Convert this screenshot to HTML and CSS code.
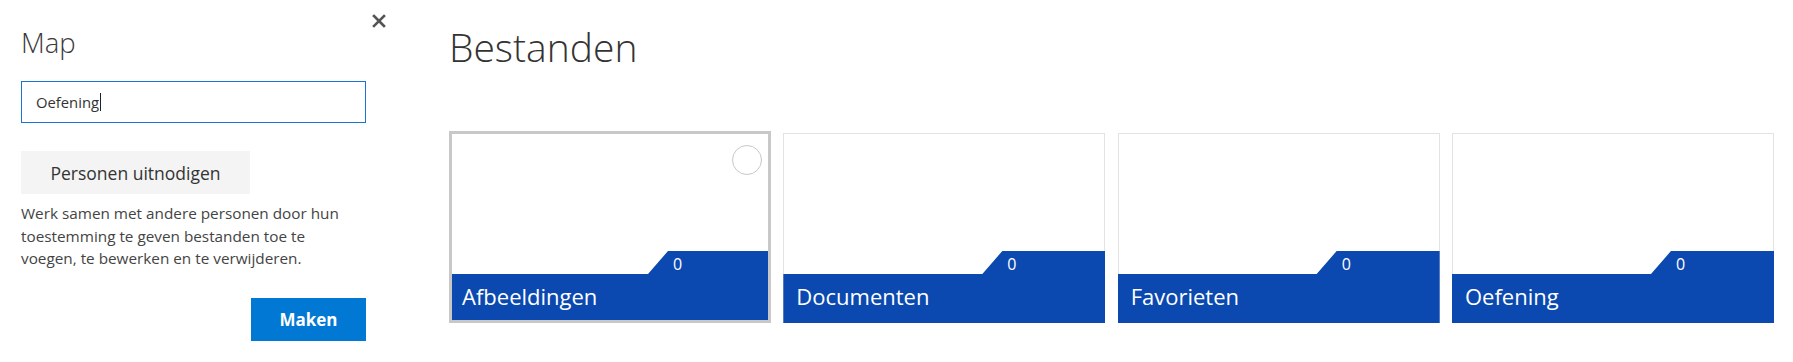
FILE: index.html
```html
<!DOCTYPE html>
<html lang="nl">
<head>
<meta charset="utf-8">
<title>Bestanden</title>
<link rel="stylesheet" href="styles.css">
</head>
<body>
<div class="page">
  <aside class="panel">
    <button class="close" aria-label="Sluiten">
      <svg width="14" height="14" viewBox="0 0 14 14"><path d="M2 2 L12 12 M12 2 L2 12" stroke="#555" stroke-width="2.6" stroke-linecap="square" fill="none"/></svg>
    </button>
    <h2 class="panel-title">Map</h2>
    <div class="field"><span class="field-text">Oefening</span><span class="caret"></span></div>
    <button class="btn-secondary">Personen uitnodigen</button>
    <p class="desc">Werk samen met andere personen door hun<br>toestemming te geven bestanden toe te<br>voegen, te bewerken en te verwijderen.</p>
    <div class="actions"><button class="btn-primary">Maken</button></div>
  </aside>
  <main class="main">
    <h1 class="heading">Bestanden</h1>
    <div class="cards">
      <div class="card selected">
        <div class="card-top"><span class="check"></span></div>
        <div class="card-bar"><span class="count">0</span><span class="name">Afbeeldingen</span></div>
      </div>
      <div class="card">
        <div class="card-top"></div>
        <div class="card-bar"><span class="count">0</span><span class="name">Documenten</span></div>
      </div>
      <div class="card">
        <div class="card-top"></div>
        <div class="card-bar"><span class="count">0</span><span class="name">Favorieten</span></div>
      </div>
      <div class="card">
        <div class="card-top"></div>
        <div class="card-bar"><span class="count">0</span><span class="name">Oefening</span></div>
      </div>
    </div>
  </main>
</div>
</body>
</html>
```
FILE: styles.css
```css
* { box-sizing: border-box; }
html, body { margin: 0; padding: 0; background: #fff; }
body {
  font-family: "Open Sans", "Noto Sans", sans-serif;
  color: #333;
  width: 1793px;
  height: 362px;
  overflow: hidden;
}
.page { display: flex; align-items: flex-start; }

/* Left panel */
.panel {
  position: relative;
  width: 366px;
  padding-left: 21px;
  display: flex;
  flex-direction: column;
}
.close {
  position: absolute;
  left: 372px;
  top: 14px;
  width: 14px;
  height: 14px;
  padding: 0;
  border: 0;
  background: none;
  display: block;
}
.close svg { display: block; }
.panel-title {
  margin: 25px 0 0;
  font-size: 27.5px;
  font-weight: 300;
  line-height: 36px;
  color: #3a3a3a;
}
.field {
  margin-top: 20px;
  height: 42px;
  border: 1px solid #1a73d1;
  padding-left: 14px;
  display: flex;
  align-items: center;
  font-size: 14.8px;
  color: #333;
}
.caret {
  display: inline-block;
  width: 1px;
  height: 18px;
  background: #222;
  margin-left: 1px;
}
.btn-secondary {
  margin-top: 28px;
  width: 229px;
  height: 43px;
  border: 0;
  background: #f4f4f4;
  font-family: inherit;
  font-size: 17.5px;
  color: #333;
  padding: 0;
}
.desc {
  margin: 8px 0 0;
  font-size: 15.3px;
  line-height: 22.5px;
  color: #444;
}
.actions {
  margin-top: 28.5px;
  display: flex;
  justify-content: flex-end;
}
.btn-primary {
  width: 115px;
  height: 43px;
  border: 0;
  background: #0078d4;
  color: #fff;
  font-family: inherit;
  font-weight: 700;
  font-size: 17px;
  padding: 0;
}

/* Main */
.main {
  margin-left: 83px;
  display: flex;
  flex-direction: column;
}
.heading {
  margin: 19px 0 0 0;
  font-size: 39px;
  font-weight: 300;
  line-height: 56px;
  color: #333;
}
.cards {
  margin-top: 56px;
  display: flex;
  align-items: flex-end;
  gap: 12.33px;
}
.card {
  position: relative;
  width: 322px;
  height: 190px;
  border: 1px solid #e3e3e3;
  background: #fff;
  display: flex;
  flex-direction: column;
}
.card-top { flex: 1; }
.card-bar {
  margin: 0 -1px -1px;
  height: 72px;
  background: #0b49b0;
  color: #fff;
  clip-path: polygon(0 23px, 199px 23px, 219px 0, 100% 0, 100% 100%, 0 100%);
  display: flex;
  flex-direction: column;
  align-items: flex-start;
  padding: 5px 0 0 13px;
}
.count {
  margin-left: 211px;
  font-size: 16px;
  line-height: 16px;
}
.name {
  margin-top: 9px;
  font-size: 22px;
  line-height: 30px;
}
.card.selected {
  height: 192px;
  border: 3px solid #c8c8c8;
}
.card.selected .card-bar {
  margin: 0;
  height: 69px;
  clip-path: polygon(0 23px, 196px 23px, 216px 0, 100% 0, 100% 100%, 0 100%);
  padding-left: 10px;
}
.card.selected .count { margin-left: 211px; }
.check {
  position: absolute;
  top: 11px;
  right: 6px;
  width: 30px;
  height: 30px;
  border: 1.5px solid #c8c8c8;
  border-radius: 50%;
}
```
